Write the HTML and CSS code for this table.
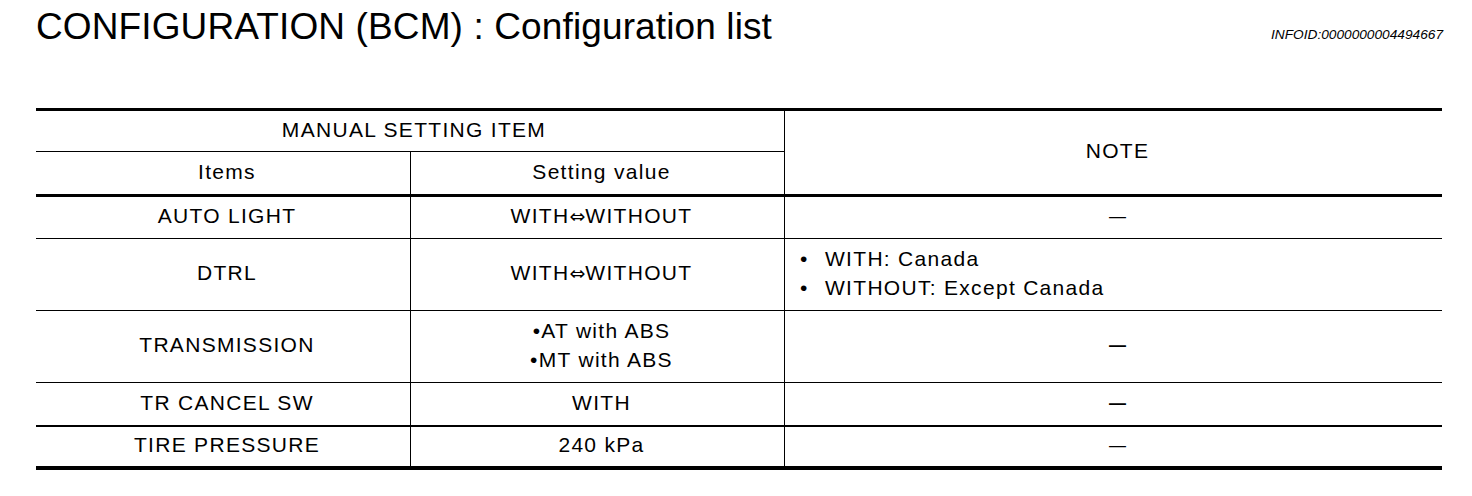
FILE: index.html
```html
<!DOCTYPE html>
<html lang="en">
<head>
<meta charset="utf-8">
<title>CONFIGURATION (BCM) : Configuration list</title>
<link rel="stylesheet" href="styles.css">
</head>
<body>
<div class="page">
  <header class="head">
    <h1 class="title">CONFIGURATION (BCM) : Configuration list</h1>
    <span class="infoid">INFOID:0000000004494667</span>
  </header>
  <table class="cfg">
    <colgroup>
      <col class="c1">
      <col class="c2">
      <col class="c3">
    </colgroup>
    <thead>
      <tr class="h1">
        <th colspan="2" class="thin">MANUAL SETTING ITEM</th>
        <th rowspan="2" class="note-h vl thick">NOTE</th>
      </tr>
      <tr class="h2">
        <th class="thick">Items</th>
        <th class="vl thick">Setting value</th>
      </tr>
    </thead>
    <tbody>
      <tr class="r-std">
        <td>AUTO LIGHT</td>
        <td class="vl">WITH<span class="arrow">⇔</span>WITHOUT</td>
        <td class="vl"><span class="dash">—</span></td>
      </tr>
      <tr class="r-tall">
        <td>DTRL</td>
        <td class="vl">WITH<span class="arrow">⇔</span>WITHOUT</td>
        <td class="vl left">
          <ul class="bullets">
            <li>WITH: Canada</li>
            <li>WITHOUT: Except Canada</li>
          </ul>
        </td>
      </tr>
      <tr class="r-tall">
        <td>TRANSMISSION</td>
        <td class="vl two">•AT with ABS<br>•MT with ABS</td>
        <td class="vl"><span class="dash bold">—</span></td>
      </tr>
      <tr class="r-cancel">
        <td class="b2">TR CANCEL SW</td>
        <td class="vl b2">WITH</td>
        <td class="vl b2"><span class="dash bold">—</span></td>
      </tr>
      <tr class="r-last">
        <td class="b4">TIRE PRESSURE</td>
        <td class="vl b4">240 kPa</td>
        <td class="vl b4"><span class="dash">—</span></td>
      </tr>
    </tbody>
  </table>
</div>
</body>
</html>
```

FILE: styles.css
```css
html, body {
  margin: 0;
  padding: 0;
  background: #ffffff;
  color: #000000;
}

.page {
  padding: 0 30px 0 36px;
  font-family: "Liberation Sans", Arial, sans-serif;
}

.head {
  display: flex;
  justify-content: space-between;
  align-items: baseline;
  height: 108px;
}

.title {
  margin: 0;
  padding-top: 7px;
  font-size: 37px;
  line-height: 40px;
  font-weight: normal;
  letter-spacing: 0.12px;
}

.infoid {
  font-size: 13.7px;
  font-style: italic;
  margin-right: -1px;
}

.cfg {
  width: 1406px;
  border-collapse: separate;
  border-spacing: 0;
  border-top: 3px solid #000;
  table-layout: fixed;
  font-size: 21px;
  letter-spacing: 1.3px;
}

.c1 { width: 374px; }
.c2 { width: 374px; }
.c3 { width: 658px; }

.cfg th,
.cfg td {
  padding: 0 0 4px 8px;
  text-align: center;
  vertical-align: middle;
  font-weight: normal;
  border-bottom: 1px solid #000;
  line-height: 29px;
}

.cfg .vl { border-left: 1px solid #000; }
.cfg .thick { border-bottom-width: 3px; }
.cfg .b2 { border-bottom-width: 2px; }
.cfg .b4 { border-bottom-width: 4px; }

.h1 { height: 41px; }
.h2 { height: 45px; }
.r-std { height: 42px; }
.r-tall { height: 72px; }
.r-cancel { height: 44px; }
.r-last { height: 43px; }

.cfg td.left {
  text-align: left;
  padding-left: 0;
}

.arrow {
  font-family: "DejaVu Sans", sans-serif;
  font-size: 19px;
  letter-spacing: 0;
}

.bullets {
  margin: 0;
  padding: 0 0 0 15px;
  list-style: none;
}

.bullets li::before {
  content: "•";
  display: inline-block;
  width: 25px;
}

.dash {
  font-size: 17px;
  letter-spacing: 0;
}

.dash.bold { font-weight: bold; }
```
